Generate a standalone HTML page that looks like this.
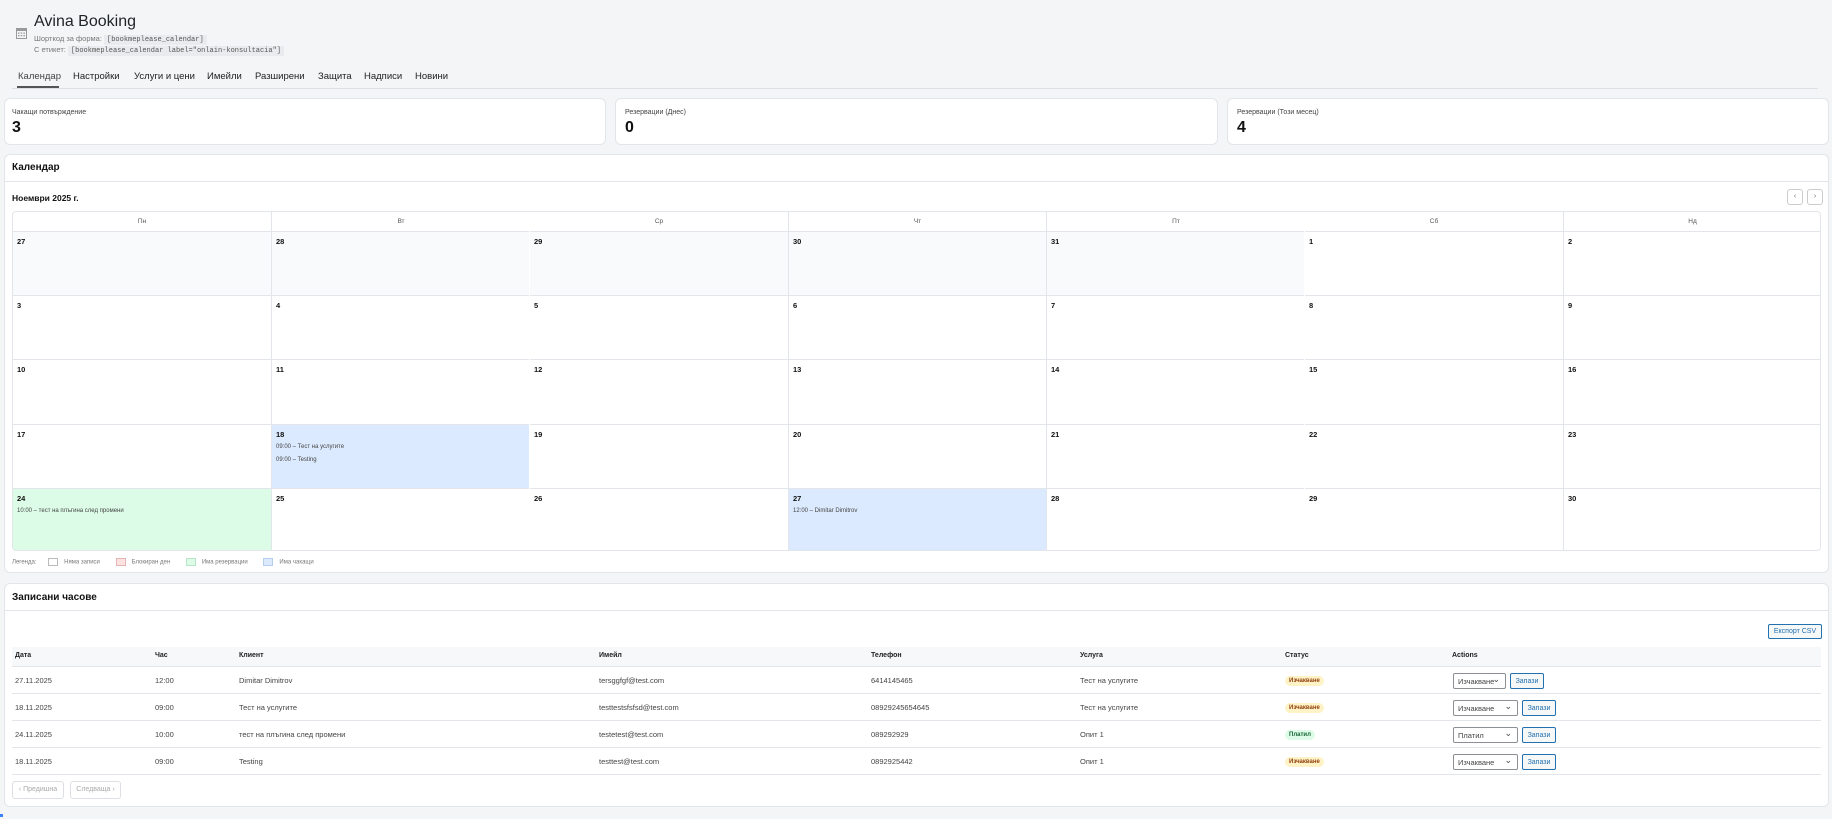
<!DOCTYPE html>
<html><head><meta charset="utf-8"><style>
*{box-sizing:border-box;margin:0;padding:0}
body{width:1832px;height:819px;background:#f4f5f7;font-family:"Liberation Sans","DejaVu Sans",sans-serif;color:#1f2937;position:relative;overflow:hidden}
.a{position:absolute;white-space:nowrap}
.card{position:absolute;background:#fff;border:1px solid #e2e5ea;border-radius:6px}
.code{background:#e9ebee;font-family:"Liberation Mono",monospace;font-size:7px;padding:1px 3px;color:#555}
.tab{font-size:9.5px;color:#222;top:71px}
.lbl{font-size:7px;color:#444}
.num{font-size:16px;font-weight:bold;color:#111}
.grid{position:absolute;left:12px;top:211px;width:1809px;height:340px;border:1px solid #e2e5ea;border-radius:4px;overflow:hidden}
.hd{position:absolute;top:0;height:19px;font-size:6.5px;color:#555;text-align:center;line-height:19px}
.cell{position:absolute;height:64.2px;font-size:7.5px;font-weight:bold;padding:5px 4px;color:#111}
.cell div{font-weight:normal;font-size:6px;color:#444;margin-top:4px;line-height:9px}
.th{font-size:7px;font-weight:bold;top:652px;color:#222}
.td{font-size:7.5px;color:#444}
.badge{font-size:6px;font-weight:bold;padding:2px 4px;border-radius:8px}
.sel{position:absolute;height:16px;border:1px solid #8c8f94;border-radius:2px;font-size:7.5px;color:#444;padding:3px 4px;background:#fff}
.sel:after{content:"⌄";position:absolute;right:5px;top:0px;font-size:9px}
.btn{position:absolute;height:16px;border:1px solid #2271b1;border-radius:2px;font-size:7px;color:#2271b1;text-align:center;line-height:14px;background:#f6f7f7}
</style></head><body>

<svg class="a" style="left:16px;top:27px" width="11" height="12" viewBox="0 0 11 12"><rect x="0.5" y="1.5" width="10" height="10" fill="none" stroke="#999" stroke-width="1"/><rect x="0.5" y="1.5" width="10" height="2.5" fill="#999"/><g fill="#999"><rect x="2" y="5.5" width="1.5" height="1.3"/><rect x="4.7" y="5.5" width="1.5" height="1.3"/><rect x="7.4" y="5.5" width="1.5" height="1.3"/><rect x="2" y="8" width="1.5" height="1.3"/><rect x="4.7" y="8" width="1.5" height="1.3"/><rect x="7.4" y="8" width="1.5" height="1.3"/></g></svg>
<div class="a" style="left:34px;top:13px;font-size:16px;color:#1d2327">Avina Booking</div>
<div class="a" style="left:34px;top:34px;font-size:7.5px;color:#777">Шорткод за форма: <span class="code">[bookmeplease_calendar]</span></div>
<div class="a" style="left:34px;top:45px;font-size:7.5px;color:#777">С етикет: <span class="code">[bookmeplease_calendar label="onlain-konsultacia"]</span></div>

<div class="a tab" style="left:18px;color:#444">Календар</div>
<div class="a" style="left:17px;top:86px;width:42px;height:2px;background:#555"></div>
<div class="a tab" style="left:73px">Настройки</div>
<div class="a tab" style="left:134px">Услуги и цени</div>
<div class="a tab" style="left:207px">Имейли</div>
<div class="a tab" style="left:255px">Разширени</div>
<div class="a tab" style="left:318px">Защита</div>
<div class="a tab" style="left:364px">Надписи</div>
<div class="a tab" style="left:415px">Новини</div>
<div class="a" style="left:12px;top:88px;width:1806px;height:1px;background:#dcdfe3"></div>

<div class="card" style="left:4px;top:98px;width:602px;height:47px"><div class="a lbl" style="left:7px;top:10px">Чакащи потвърждение</div><div class="a num" style="left:7px;top:20px">3</div></div>
<div class="card" style="left:615px;top:98px;width:603px;height:47px"><div class="a lbl" style="left:9px;top:10px">Резервации (Днес)</div><div class="a num" style="left:9px;top:20px">0</div></div>
<div class="card" style="left:1227px;top:98px;width:602px;height:47px"><div class="a lbl" style="left:9px;top:10px">Резервации (Този месец)</div><div class="a num" style="left:9px;top:20px">4</div></div>

<div class="card" style="left:4px;top:154px;width:1825px;height:419px"></div>
<div class="a" style="left:12px;top:162px;font-size:10px;font-weight:bold;color:#111">Календар</div>
<div class="a" style="left:4px;top:181px;width:1825px;height:1px;background:#e2e5ea"></div>
<div class="a" style="left:12px;top:193px;font-size:8.5px;font-weight:bold;color:#111">Ноември 2025 г.</div>
<div class="a" style="left:1787px;top:189px;width:16px;height:16px;border:1px solid #ccc;border-radius:3px;font-size:7px;text-align:center;line-height:14px;color:#666">‹</div>
<div class="a" style="left:1807px;top:189px;width:16px;height:16px;border:1px solid #ccc;border-radius:3px;font-size:7px;text-align:center;line-height:14px;color:#666">›</div>

<div class="grid">
<div class="hd" style="left:0;width:258px">Пн</div>
<div class="hd" style="left:258px;width:259px;border-left:1px solid #e2e5ea">Вт</div>
<div class="hd" style="left:517px;width:258px">Ср</div>
<div class="hd" style="left:775px;width:258px;border-left:1px solid #e2e5ea">Чт</div>
<div class="hd" style="left:1033px;width:259px;border-left:1px solid #e2e5ea">Пт</div>
<div class="hd" style="left:1292px;width:258px">Сб</div>
<div class="hd" style="left:1550px;width:258px;border-left:1px solid #e2e5ea">Нд</div>
<div id="cells"></div>
</div>
<script>
var L=[0,258,517,775,1033,1292,1550],W=258.4,bl=[0,1,0,1,1,0,1];
var days=[[27,28,29,30,31,1,2],[3,4,5,6,7,8,9],[10,11,12,13,14,15,16],[17,18,19,20,21,22,23],[24,25,26,27,28,29,30]];
var ev={"3-1":["09:00 – Тест на услугите","09:00 – Testing"],"4-0":["10:00 – тест на плъгина след промени"],"4-3":["12:00 – Dimitar Dimitrov"]};
var h="";
for(var r=0;r<5;r++)for(var c=0;c<7;c++){
 var bg="#fff";if(r==0&&c<5)bg="#f9fafb";
 var k=r+"-"+c;if(k=="3-1"||k=="4-3")bg="#dbeafe";if(k=="4-0")bg="#dcfce7";
 var b="border-top:1px solid #e2e5ea;"+(bl[c]?"border-left:1px solid #e2e5ea;":"");
 var e=(ev[k]||[]).map(function(x){return "<div>"+x+"</div>"}).join("");
 h+='<div class="cell" style="left:'+L[c]+'px;top:'+(19+r*64.2)+'px;width:'+W+'px;background:'+bg+';'+b+'">'+days[r][c]+e+'</div>';
}
document.getElementById("cells").innerHTML=h;
</script>
<div class="a" style="left:12px;top:558px;font-size:6px;color:#777">Легенда:
<span style="display:inline-block;width:10px;height:8px;border:1px solid #bbb;background:#fff;margin:0 6px 0 10px;vertical-align:middle"></span>Няма записи
<span style="display:inline-block;width:10px;height:8px;border:1px solid #e6b3b3;background:#fde2e2;margin:0 6px 0 14px;vertical-align:middle"></span>Блокиран ден
<span style="display:inline-block;width:10px;height:8px;border:1px solid #b9e3c6;background:#dcfce7;margin:0 6px 0 14px;vertical-align:middle"></span>Има резервации
<span style="display:inline-block;width:10px;height:8px;border:1px solid #b6cdee;background:#dbeafe;margin:0 6px 0 14px;vertical-align:middle"></span>Има чакащи</div>

<div class="card" style="left:4px;top:583px;width:1825px;height:224px"></div>
<div class="a" style="left:12px;top:592px;font-size:10px;font-weight:bold;color:#111">Записани часове</div>
<div class="a" style="left:4px;top:610px;width:1825px;height:1px;background:#e2e5ea"></div>
<div class="btn" style="left:1768px;top:624px;width:54px;height:15px;font-size:7px">Експорт CSV</div>
<div class="a" style="left:12px;top:647px;width:1809px;height:20px;background:#f6f8fa;border-bottom:1px solid #e2e5ea"></div>
<div class="a th" style="left:15px">Дата</div><div class="a th" style="left:155px">Час</div><div class="a th" style="left:239px">Клиент</div><div class="a th" style="left:599px">Имейл</div><div class="a th" style="left:871px">Телефон</div><div class="a th" style="left:1080px">Услуга</div><div class="a th" style="left:1285px">Статус</div><div class="a th" style="left:1452px">Actions</div>
<div id="rows"></div>
<script>
var R=[["27.11.2025","12:00","Dimitar Dimitrov","tersggfgf@test.com","6414145465","Тест на услугите","Изчакване",0,"Изчакване",53],
["18.11.2025","09:00","Тест на услугите","testtestsfsfsd@test.com","08929245654645","Тест на услугите","Изчакване",0,"Изчакване",65],
["24.11.2025","10:00","тест на плъгина след промени","testetest@test.com","089292929","Опит 1","Платил",1,"Платил",65],
["18.11.2025","09:00","Testing","testtest@test.com","0892925442","Опит 1","Изчакване",0,"Изчакване",65]];
var X=[15,155,239,599,871,1080],s="";
R.forEach(function(r,i){var y=667+i*27;
 s+='<div class="a" style="left:12px;top:'+(y+26)+'px;width:1809px;height:1px;background:#e2e5ea"></div>';
 for(var j=0;j<6;j++)s+='<div class="a td" style="left:'+X[j]+'px;top:'+(y+9)+'px">'+r[j]+'</div>';
 s+='<div class="a badge" style="left:1285px;top:'+(y+9)+'px;'+(r[7]?'background:#dcfce7;color:#166534':'background:#fef3c7;color:#92400e')+'">'+r[6]+'</div>';
 s+='<div class="sel" style="left:1453px;top:'+(y+6)+'px;width:'+r[9]+'px">'+r[8]+'</div>';
 s+='<div class="btn" style="left:'+(1453+r[9]+4)+'px;top:'+(y+6)+'px;width:34px;line-height:15px">Запази</div>';
});
document.getElementById("rows").innerHTML=s;
</script>
<div class="a" style="left:12px;top:781px;width:52px;height:18px;border:1px solid #dcdfe3;border-radius:3px;font-size:7px;color:#aaa;text-align:center;line-height:16px">‹ Предишна</div>
<div class="a" style="left:70px;top:781px;width:51px;height:18px;border:1px solid #dcdfe3;border-radius:3px;font-size:7px;color:#aaa;text-align:center;line-height:16px">Следваща ›</div>
<div class="a" style="left:0;top:814px;width:3px;height:3px;background:#3b82f6"></div>
</body></html>
